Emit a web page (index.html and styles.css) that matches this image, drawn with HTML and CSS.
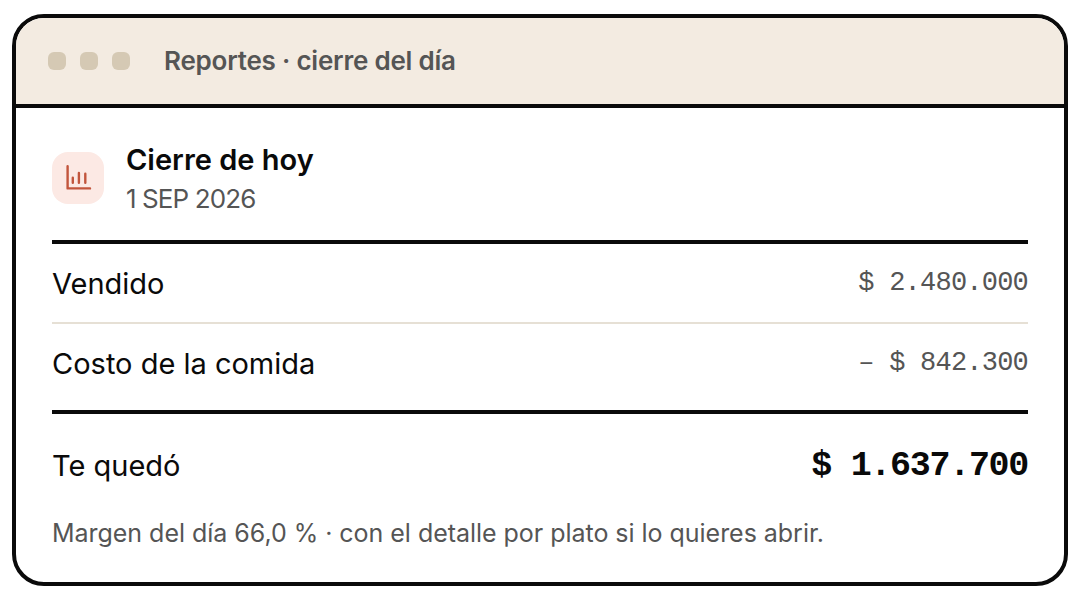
FILE: index.html
```html
<!DOCTYPE html>
<html lang="es">
	<head>
		<meta charset="UTF-8">
		<title>Reportes · cierre del día</title>
		<link rel="stylesheet" href="styles.css">
	</head>
	<body>
		<div class="card">
			<div class="bar">
				<div class="dots">
					<span></span>
					<span></span>
					<span></span>
				</div>
				<p class="bar-title">Reportes · cierre del día</p>
			</div>
			<div class="content">
				<div class="head">
					<div class="icon">
						<svg width="28" height="28" viewBox="0 0 28 28" fill="none" stroke="#c2553c" stroke-width="2.4" stroke-linecap="round" stroke-linejoin="round">
							<path d="M3.6 2.2v22.2H26"/>
							<path d="M8.8 13.8v5M14.9 9v9.8M21.3 9.8v9"/>
						</svg>
					</div>
					<div class="head-text">
						<h1 class="title">Cierre de hoy</h1>
						<p class="date">1 SEP 2026</p>
					</div>
				</div>
				<div class="row">
					<span class="label">Vendido</span>
					<span class="value">$ 2.480.000</span>
				</div>
				<div class="row row-cost">
					<span class="label">Costo de la comida</span>
					<span class="value">– $ 842.300</span>
				</div>
				<div class="row row-total">
					<span class="label">Te quedó</span>
					<span class="total">$ 1.637.700</span>
				</div>
				<p class="note">Margen del día 66,0 % · con el detalle por plato si lo quieres abrir.</p>
			</div>
		</div>
	</body>
</html>
```
FILE: styles.css
```css
*{
	margin: 0;
	padding: 0;
	box-sizing: border-box;
}
body{
	padding: 14px 12px 0;
	background: #fff;
	color: #0a0a0a;
	font-family: Inter, "Liberation Sans", sans-serif;
}
.card{
	height: 572px;
	border: 4px solid #0a0a0a;
	border-radius: 32px;
	overflow: hidden;
	background: #fff;
}
.bar{
	display: flex;
	align-items: center;
	gap: 34px;
	height: 90px;
	padding: 0 32px;
	background: #f3ebe1;
	border-bottom: 4px solid #0a0a0a;
}
.dots{
	display: flex;
	gap: 14px;
}
.dots span{
	width: 18px;
	height: 18px;
	border-radius: 6px;
	background: #d5c9b4;
}
.bar-title{
	font-size: 26px;
	font-weight: 600;
	line-height: 34px;
	letter-spacing: -0.22px;
	color: #555;
}
.content{
	padding: 0 36px;
}
.head{
	display: flex;
	gap: 22px;
	height: 136px;
	padding-top: 34px;
	border-bottom: 4px solid #0a0a0a;
}
.icon{
	display: flex;
	align-items: center;
	justify-content: center;
	width: 52px;
	height: 52px;
	margin-top: 10px;
	border-radius: 16px;
	background: #fce9e4;
}
.title{
	font-size: 29px;
	font-weight: 600;
	line-height: 36px;
	letter-spacing: 0;
}
.date{
	margin-top: 2px;
	font-size: 26px;
	line-height: 38px;
	letter-spacing: -0.9px;
	color: #555;
}
.row{
	display: flex;
	justify-content: space-between;
	align-items: center;
	height: 80px;
	padding-top: 2px;
	border-bottom: 2px solid #e6e0d5;
}
.row-cost{
	height: 90px;
	padding-bottom: 8px;
	border-bottom: 4px solid #0a0a0a;
}
.row-total{
	height: 102px;
	border-bottom: 0;
}
.label{
	font-size: 29px;
	line-height: 40px;
	letter-spacing: 0;
}
.value{
	margin-bottom: 3px;
	font-family: "Liberation Mono", monospace;
	font-size: 27px;
	line-height: 34px;
	letter-spacing: -0.78px;
	color: #555;
}
.total{
	font-family: "Liberation Mono", monospace;
	font-size: 35px;
	font-weight: 700;
	line-height: 44px;
	letter-spacing: -1.3px;
}
.note{
	font-size: 25px;
	line-height: 34px;
	letter-spacing: -0.03px;
	color: #555;
	white-space: nowrap;
}
```
